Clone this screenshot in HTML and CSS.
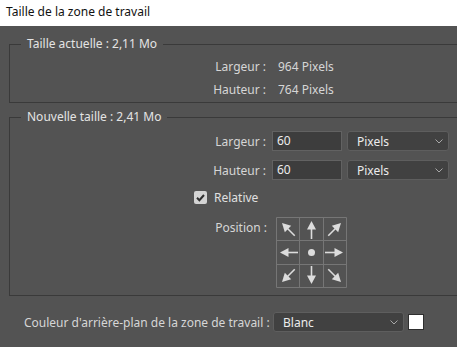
FILE: index.html
```html
<!DOCTYPE html>
<html lang="fr">
<head>
  <meta charset="UTF-8">
  <title>Taille de la zone de travail</title>
  <link rel="stylesheet" href="styles.css">
</head>
<body>

<div class="titlebar">Taille de la zone de travail</div>

<div class="panel">
  <fieldset class="group group-current">
    <legend>Taille actuelle : 2,11 Mo</legend>
    <div class="row">
      <span class="label">Largeur :</span>
      <span class="value">964 Pixels</span>
    </div>
    <div class="row">
      <span class="label">Hauteur :</span>
      <span class="value">764 Pixels</span>
    </div>
  </fieldset>

  <fieldset class="group group-new">
    <legend>Nouvelle taille : 2,41 Mo</legend>
    <div class="row row-field">
      <span class="label">Largeur :</span>
      <div class="input">60</div>
      <div class="select select-unit">
        <span>Pixels</span>
        <svg class="chevron" width="8" height="5" viewBox="0 0 8 5"><path d="M0.5 0.5 L4 4 L7.5 0.5" fill="none" stroke="#a8a8a8" stroke-width="1"/></svg>
      </div>
    </div>
    <div class="row row-field">
      <span class="label">Hauteur :</span>
      <div class="input">60</div>
      <div class="select select-unit">
        <span>Pixels</span>
        <svg class="chevron" width="8" height="5" viewBox="0 0 8 5"><path d="M0.5 0.5 L4 4 L7.5 0.5" fill="none" stroke="#a8a8a8" stroke-width="1"/></svg>
      </div>
    </div>
    <div class="row row-check">
      <span class="checkbox">
        <svg width="13" height="13" viewBox="0 0 13 13"><path d="M3 6.8 L5.4 9.2 L10 4" fill="none" stroke="#2f2f2f" stroke-width="2"/></svg>
      </span>
      <span class="check-label">Relative</span>
    </div>
    <div class="row row-anchor">
      <span class="label">Position :</span>
      <svg class="anchor" width="71" height="71" viewBox="0 0 71 71">
        <defs>
          <g id="arr">
            <path d="M0 18 L0 6" stroke="#dcdcdc" stroke-width="1.6"/>
            <path d="M0 0 L-4.5 8.5 L4.5 8.5 Z" fill="#dcdcdc"/>
          </g>
        </defs>
        <path d="M0.5 0.5 H70.5 V70.5 H0.5 Z M23.5 0.5 V70.5 M47.5 0.5 V70.5 M0.5 23.5 H70.5 M0.5 47.5 H70.5" fill="none" stroke="#767676" stroke-width="1"/>
        <use href="#arr" transform="translate(6 6) rotate(-45)"/>
        <use href="#arr" transform="translate(35.5 4)"/>
        <use href="#arr" transform="translate(65 6) rotate(45)"/>
        <use href="#arr" transform="translate(4 35.5) rotate(-90)"/>
        <circle cx="35.5" cy="35.5" r="3.5" fill="#dcdcdc"/>
        <use href="#arr" transform="translate(67 35.5) rotate(90)"/>
        <use href="#arr" transform="translate(6 65) rotate(-135)"/>
        <use href="#arr" transform="translate(35.5 67) rotate(180)"/>
        <use href="#arr" transform="translate(65 65) rotate(135)"/>
      </svg>
    </div>
  </fieldset>

  <div class="bg-row">
    <span class="bg-label">Couleur d'arrière-plan de la zone de travail :</span>
    <div class="select select-bg">
      <span>Blanc</span>
      <svg class="chevron" width="8" height="5" viewBox="0 0 8 5"><path d="M0.5 0.5 L4 4 L7.5 0.5" fill="none" stroke="#a8a8a8" stroke-width="1"/></svg>
    </div>
    <span class="swatch"></span>
  </div>
</div>

</body>
</html>
```

FILE: styles.css
```css
body {
  margin: 0;
  font-family: 'Noto Sans', 'Open Sans', sans-serif;
  font-size: 12px;
  background: #535353;
  color: #d6d6d6;
  height: 100vh;
  overflow: hidden;
}

.titlebar {
  height: 26px;
  line-height: 23px;
  padding-left: 6px;
  background: white;
  color: #111;
}

/* the group frames run on past the right edge of the dialog */
.panel {
  overflow: hidden;
}

.group {
  margin: 10px -12px 0 9px;
  padding: 0 0 1px 11px;
  border: 1px solid #3a3a3a;
  min-width: 0;
}

.group legend {
  padding: 0 6px;
  line-height: 16px;
  color: #e4e4e4;
}

.group-current {
  padding-top: 3px;
}

.group-new {
  margin-top: 6px;
  padding-top: 6px;
  padding-bottom: 7px;
}

.row {
  display: flex;
  align-items: center;
  height: 23px;
}

.label {
  width: 245px;
  text-align: right;
  flex-shrink: 0;
}

.value {
  margin-left: 12px;
}

.row-field {
  height: 20px;
  margin-bottom: 9px;
}

.row-field .label {
  margin-right: 6px;
}

.input {
  box-sizing: border-box;
  width: 70px;
  height: 20px;
  line-height: 18px;
  padding-left: 4px;
  background: #3d3d3d;
  border: 1px solid #626262;
  color: #ececec;
}

.select {
  box-sizing: border-box;
  height: 20px;
  display: flex;
  align-items: center;
  justify-content: space-between;
  padding: 0 5px 0 9px;
  background: #414141;
  border: 1px solid #5e5e5e;
  border-radius: 3px;
  color: #ececec;
}

.select-unit {
  width: 102px;
  margin-left: 5px;
}

.row-check {
  height: 16px;
  margin-top: 7px;
  padding-left: 173px;
}

.checkbox {
  width: 13px;
  height: 13px;
  background: #d4d4d4;
  border-radius: 2px;
  display: flex;
}

.check-label {
  margin-left: 7px;
  color: #e0e0e0;
}

.row-anchor {
  height: 71px;
  margin-top: 12px;
  align-items: flex-start;
}

.row-anchor .label {
  width: 246px;
  margin-right: 9px;
  margin-top: 2px;
}

.anchor {
  display: block;
}

.bg-row {
  display: flex;
  align-items: center;
  margin-top: 16px;
  padding-left: 24px;
}

.bg-label {
  width: 249px;
}

.select-bg {
  width: 131px;
}

.swatch {
  width: 14px;
  height: 14px;
  margin-left: 4px;
  background: white;
  border: 1px solid #2e2e2e;
}
```
